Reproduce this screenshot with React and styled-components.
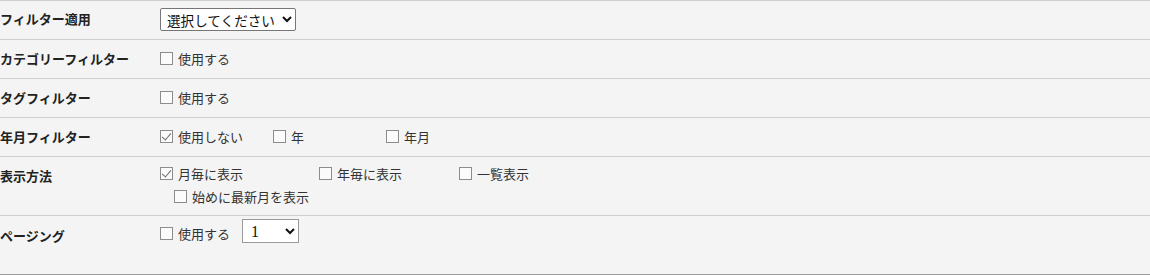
import React from "react";
import styled, {createGlobalStyle} from "styled-components";

const GlobalStyle = createGlobalStyle`
    html, body {
        margin: 0;
        padding: 0;
        background: #f4f4f4;
    }
    body {
        font-family: "Noto Sans CJK JP", "Noto Sans", sans-serif;
        font-size: 13px;
        color: #333;
    }
`;

const Form = styled.div`
    width: 1150px;
    border-top: 1px solid #cfcfcf;
    border-bottom: 1px solid #9a9a9a;
`;

const Row = styled.div`
    display: grid;
    grid-template-columns: 160px 1fr;
    border-top: ${p => (p.$first ? "none" : "1px solid #cfcfcf")};
`;

const Label = styled.div`
    padding-top: ${p => p.$top || 9}px;
    line-height: 20px;
    font-weight: bold;
    font-size: 13px;
    color: #222;
    white-space: nowrap;
`;

const Cell = styled.div`
    display: flex;
    flex-direction: column;
    padding: ${p => p.$pad || "7px 0 8px"};
`;

const Line = styled.div`
    display: flex;
    align-items: center;
    height: ${p => p.$h || 23}px;
    padding-left: ${p => p.$indent || 0}px;
`;

const Option = styled.label`
    display: flex;
    align-items: center;
    width: ${p => (p.$w ? `${p.$w}px` : "auto")};
    margin-top: ${p => p.$shift || 0}px;
    line-height: 18px;
    white-space: nowrap;
    cursor: pointer;
`;

const Box = styled.input.attrs({type: "checkbox"})`
    appearance: none;
    -webkit-appearance: none;
    position: relative;
    flex: none;
    width: 13px;
    height: 13px;
    margin: 0 5px 0 0;
    border: 1px solid #8c8c8c;
    background: #fbfbfb;
    box-sizing: border-box;

    &:checked::after {
        content: "";
        position: absolute;
        left: 3px;
        top: 0px;
        width: 4px;
        height: 8px;
        border-right: 1px solid #6a6a6a;
        border-bottom: 1px solid #6a6a6a;
        transform: rotate(40deg);
    }
`;

const Select = styled.select`
    font-family: "Noto Sans CJK JP", "Noto Sans", sans-serif;
    font-size: 13.6px;
    height: 23px;
    width: ${p => p.$w}px;
    border: 1px solid #767676;
    border-radius: 2px;
    background: #fff;
    color: #111;
    padding: 0 0 0 2px;
    margin: 0;
`;

const NumSelect = styled(Select)`
    font-family: "Liberation Serif", serif;
    font-size: 16px;
    height: 24px;
    border: 1px solid #9a9a9a;
    border-radius: 0;
    padding-left: 4px;
    margin-left: 12px;
`;

const Check = ({label, checked, w, shift}) => (
    <Option $w={w} $shift={shift}>
        <Box defaultChecked={checked} />
        {label}
    </Option>
);

const App = () => {
    return (
        <>
            <GlobalStyle />
            <Form>
                <Row $first>
                    <Label $top={8}>フィルター適用</Label>
                    <Cell>
                        <Line>
                            <Select $w={136} defaultValue="">
                                <option value="">選択してください</option>
                            </Select>
                        </Line>
                    </Cell>
                </Row>
                <Row>
                    <Label>カテゴリーフィルター</Label>
                    <Cell>
                        <Line>
                            <Check label="使用する" />
                        </Line>
                    </Cell>
                </Row>
                <Row>
                    <Label>タグフィルター</Label>
                    <Cell>
                        <Line>
                            <Check label="使用する" />
                        </Line>
                    </Cell>
                </Row>
                <Row>
                    <Label>年月フィルター</Label>
                    <Cell>
                        <Line>
                            <Check label="使用しない" checked w={113} />
                            <Check label="年" w={113} />
                            <Check label="年月" />
                        </Line>
                    </Cell>
                </Row>
                <Row>
                    <Label>表示方法</Label>
                    <Cell $pad="5px 0 7px">
                        <Line>
                            <Check label="月毎に表示" checked w={159} />
                            <Check label="年毎に表示" w={140} />
                            <Check label="一覧表示" />
                        </Line>
                        <Line $indent={14}>
                            <Check label="始めに最新月を表示" />
                        </Line>
                    </Cell>
                </Row>
                <Row>
                    <Label $top={10}>ページング</Label>
                    <Cell $pad="3px 0 31px">
                        <Line $h={24}>
                            <Check label="使用する" shift={5} />
                            <NumSelect $w={57} defaultValue="1">
                                <option value="1">1</option>
                            </NumSelect>
                        </Line>
                    </Cell>
                </Row>
            </Form>
        </>
    );
};

export default App;
